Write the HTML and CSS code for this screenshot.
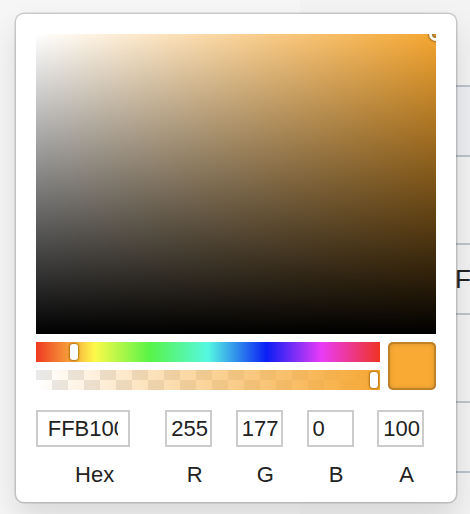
FILE: index.html
```html
<!DOCTYPE html>
<html>
<head>
<meta charset="utf-8">
<link rel="stylesheet" href="styles.css">
</head>
<body>
<div class="page">
  <div class="table">
    <div class="row h87"></div>
    <div class="row h70 tint"></div>
    <div class="row h88"></div>
    <div class="row h70"><span class="cell">F4</span></div>
    <div class="row h88"></div>
    <div class="row h70"></div>
    <div class="row last"></div>
  </div>

  <div class="sketch">
    <div class="sat">
      <div class="sat-white"></div>
      <div class="sat-black"></div>
      <div class="sat-pointer"></div>
    </div>
    <div class="controls">
      <div class="sliders">
        <div class="hue">
          <div class="hue-pointer"></div>
        </div>
        <div class="alpha">
          <div class="alpha-grad"></div>
          <div class="alpha-pointer"></div>
        </div>
      </div>
      <div class="swatch"><div class="swatch-active"></div></div>
    </div>
    <div class="fields">
      <div class="field double">
        <input class="inp" type="text" value="FFB100">
        <label class="lbl">Hex</label>
      </div>
      <div class="field single">
        <input class="inp" type="text" value="255">
        <label class="lbl">R</label>
      </div>
      <div class="field single">
        <input class="inp" type="text" value="177">
        <label class="lbl">G</label>
      </div>
      <div class="field single">
        <input class="inp" type="text" value="0">
        <label class="lbl">B</label>
      </div>
      <div class="field single">
        <input class="inp" type="text" value="100">
        <label class="lbl">A</label>
      </div>
    </div>
  </div>
</div>
</body>
</html>
```

FILE: styles.css
```css
html, body {
  margin: 0;
  padding: 0;
}
body {
  width: 470px;
  height: 514px;
  overflow: hidden;
  background: #f6f6f6;
  font-family: "Liberation Sans", Arial, sans-serif;
}
.page {
  position: relative;
  width: 470px;
  height: 514px;
  overflow: hidden;
}
.table {
  margin-left: 300px;
  width: 170px;
  display: flex;
  flex-direction: column;
}
.row {
  box-sizing: border-box;
  border-bottom: 2px solid #bcc4cc;
  display: flex;
  align-items: center;
  background: #f3f3f3;
  overflow: hidden;
}
.h87 { height: 87px; }
.h70 { height: 70px; }
.h88 { height: 88px; }
.last { height: 60px; border-bottom: none; }
.row.tint { background: #edeff2; }
.cell {
  margin-left: 155px;
  font-size: 26px;
  color: #222;
  white-space: nowrap;
}

.sketch {
  position: absolute;
  left: 16px;
  top: 14px;
  width: 400px;
  padding: 20px 20px 0;
  background: #fff;
  border-radius: 8px;
  box-shadow: 0 0 0 1.5px rgba(0,0,0,0.17), 0 16px 32px rgba(0,0,0,0.12);
}
.sat {
  position: relative;
  height: 300px;
  overflow: hidden;
  background: #f5a630;
}
.sat-white, .sat-black {
  position: absolute;
  inset: 0;
}
.sat-white {
  background: linear-gradient(to right, #fff, rgba(255,255,255,0));
}
.sat-black {
  background: linear-gradient(to top, #000, rgba(0,0,0,0));
}
.sat-pointer {
  position: absolute;
  right: -4px;
  top: -4px;
  width: 8px;
  height: 8px;
  border-radius: 50%;
  box-shadow: 0 0 0 3px #fff, inset 0 0 2px 2px rgba(0,0,0,0.3), 0 0 2px 4px rgba(0,0,0,0.35);
}
.controls {
  display: flex;
}
.sliders {
  flex: 1;
  padding: 8px 0;
}
.hue {
  position: relative;
  height: 20px;
  background: linear-gradient(to right,
    #ef3a24 0%, #f7a23a 10%, #fdf94a 17%, #58f447 33%, #56f8e2 50%,
    #0a1ff5 67%, #ea3cf7 83%, #ef3324 100%);
}
.hue-pointer {
  position: absolute;
  left: 34px;
  top: 2px;
  width: 8px;
  height: 16px;
  border-radius: 3px;
  background: #fff;
  box-shadow: 0 0 2px 1px rgba(150,90,0,0.7);
}
.alpha {
  position: relative;
  height: 20px;
  margin-top: 8px;
  background-color: #fff;
  background-image: conic-gradient(#fff 0 25%, #e9e9e9 0 50%, #fff 0 75%, #e9e9e9 0);
  background-size: 32px 20px;
}
.alpha-grad {
  position: absolute;
  inset: 0;
  background: linear-gradient(to right, rgba(246,168,52,0), rgba(246,168,52,1));
}
.alpha-pointer {
  position: absolute;
  right: 2px;
  top: 2px;
  width: 8px;
  height: 16px;
  border-radius: 3px;
  background: #fff;
  box-shadow: 0 0 2px 1px rgba(150,90,0,0.7);
}
.swatch {
  position: relative;
  width: 48px;
  height: 48px;
  margin-top: 8px;
  margin-left: 8px;
  border-radius: 6px;
  background: #fff;
}
.swatch-active {
  position: absolute;
  inset: 0;
  border-radius: 5px;
  background: #f8aa34;
  box-shadow: inset 0 0 0 2px rgba(0,0,0,0.15), inset 0 0 6px rgba(0,0,0,0.25);
}
.fields {
  display: flex;
  padding-top: 12px;
}
.field {
  display: flex;
  flex-direction: column;
  min-width: 0;
}
.double { flex: 2; }
.single { flex: 1; padding-left: 12px; }
.inp {
  display: block;
  box-sizing: border-box;
  width: 80%;
  height: 37px;
  margin: 0;
  padding: 0 10% 0 10%;
  border: none;
  box-shadow: inset 0 0 0 2px #ccc;
  font-family: "Liberation Sans", Arial, sans-serif;
  font-size: 22px;
  color: #222;
  background: #fff;
  outline: none;
}
.single .inp { padding-right: 2px; }
.lbl {
  display: block;
  text-align: center;
  font-size: 22px;
  color: #222;
  padding-top: 15px;
  padding-bottom: 14px;
}
```
